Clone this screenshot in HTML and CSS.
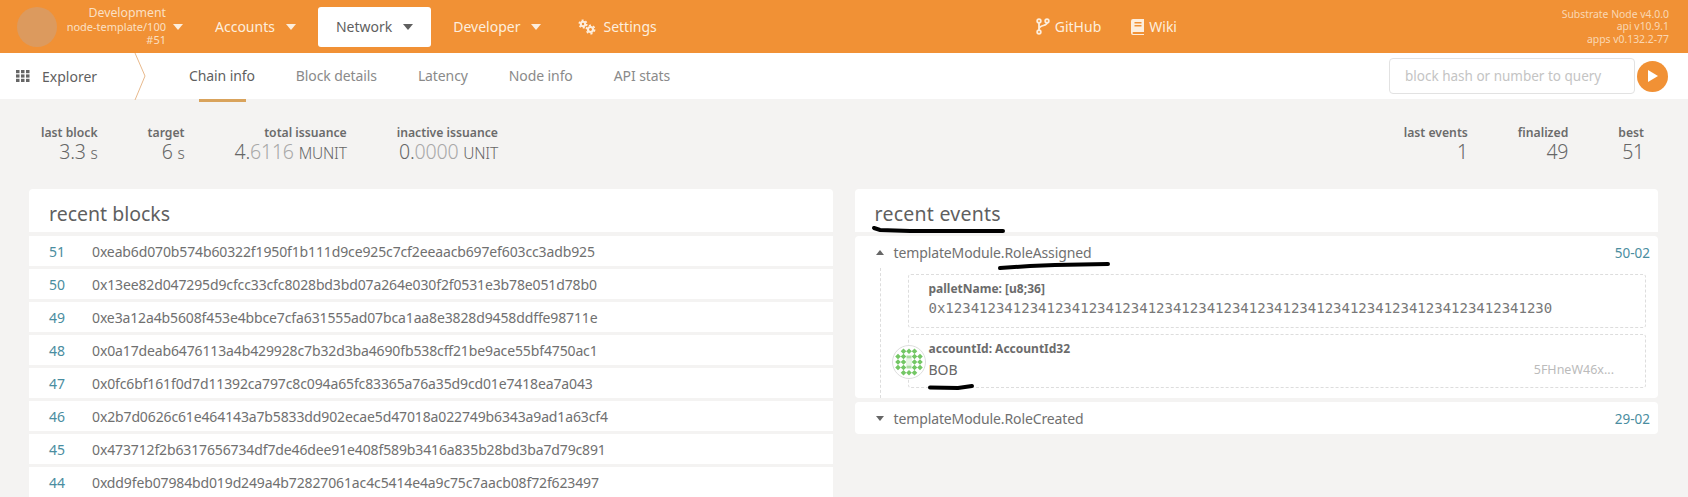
FILE: index.html
```html
<!DOCTYPE html>
<html lang="en">

<head>
    <meta charset="UTF-8">
    <title>Polkadot/Substrate Portal</title>
    <link rel="stylesheet" href="styles.css">
</head>

<body>
    <!-- top bar -->
    <header class="topbar">
        <div class="logo"></div>
        <div class="chain">
            <div class="chain-name">Development</div>
            <div class="chain-node">node-template/100</div>
            <div class="chain-best">#51</div>
        </div>
        <span class="caret chain-caret"></span>
        <nav class="menu">
            <a class="menu-item">Accounts<span class="caret"></span></a>
            <a class="menu-item active">Network<span class="caret"></span></a>
            <a class="menu-item">Developer<span class="caret"></span></a>
            <a class="menu-item settings">
                <svg class="icon" width="18" height="16" viewBox="0 0 18 16"><g fill="#fdeedd"><circle cx="5" cy="5" r="3.200"/><circle cx="12.5" cy="10.5" r="3.600"/></g><g fill="none" stroke="#fdeedd" stroke-width="1.500"><circle cx="5" cy="5" r="3.800" stroke-dasharray="2 2"/><circle cx="12.5" cy="10.5" r="4.200" stroke-dasharray="2.200 2.200"/></g><circle cx="5" cy="5" r="1.200" fill="#f19135"/><circle cx="12.5" cy="10.5" r="1.400" fill="#f19135"/></svg>Settings</a>
        </nav>
        <nav class="links">
            <a class="menu-item">
                <svg class="icon" width="14" height="17" viewBox="0 0 14 17"><g fill="none" stroke="#fdeedd" stroke-width="1.800"><circle cx="3" cy="3" r="1.800"/><circle cx="3" cy="14" r="1.800"/><circle cx="11" cy="3" r="1.800"/><path d="M3 5v7M11 5c0 3-8 2-8 6"/></g></svg>GitHub</a>
            <a class="menu-item">
                <svg class="icon" width="13" height="16" viewBox="0 0 13 16"><path fill="#fdeedd" d="M2 0h11v13H2.500a1 1 0 0 0 0 2H13v1H2a2 2 0 0 1-2-2V2a2 2 0 0 1 2-2z"/><rect x="3.500" y="3" width="7" height="1.500" fill="#f19135"/><rect x="3.500" y="6" width="7" height="1.500" fill="#f19135"/></svg>Wiki</a>
        </nav>
        <div class="versions">
            <div>Substrate Node v4.0.0</div>
            <div>api v10.9.1</div>
            <div>apps v0.132.2-77</div>
        </div>
    </header>

    <!-- sub navigation -->
    <div class="subbar">
        <div class="section">
            <svg class="grid-icon" width="14" height="12" viewBox="0 0 14 12"><g fill="#666"><rect width="3.500" height="3.200"/><rect x="5" width="3.500" height="3.200"/><rect x="10" width="3.500" height="3.200"/><rect y="4.400" width="3.500" height="3.200"/><rect x="5" y="4.400" width="3.500" height="3.200"/><rect x="10" y="4.400" width="3.500" height="3.200"/><rect y="8.800" width="3.500" height="3.200"/><rect x="5" y="8.800" width="3.500" height="3.200"/><rect x="10" y="8.800" width="3.500" height="3.200"/></g></svg>
            <span>Explorer</span>
        </div>
        <svg class="chevron" width="12" height="47" viewBox="0 0 12 47"><path d="M1 0l10 23L1 47" fill="none" stroke="#e8b98c"/></svg>
        <div class="tabs">
            <a class="tab active">Chain info</a>
            <a class="tab">Block details</a>
            <a class="tab">Latency</a>
            <a class="tab">Node info</a>
            <a class="tab">API stats</a>
        </div>
        <div class="query">
            <input class="query-input" placeholder="block hash or number to query">
            <button class="query-btn"><svg width="12" height="14" viewBox="0 0 12 14"><path d="M1 1l10 6-10 6z" fill="#fff"/></svg></button>
        </div>
    </div>

    <!-- summary -->
    <section class="summary">
        <div class="stats">
            <div class="stat"><label>last block</label><div class="val">3.3 <small>s</small></div></div>
            <div class="stat"><label>target</label><div class="val">6 <small>s</small></div></div>
            <div class="stat"><label>total issuance</label><div class="val">4.<span class="dec">6116</span> <small>MUNIT</small></div></div>
            <div class="stat"><label>inactive issuance</label><div class="val">0.<span class="dec">0000</span> <small>UNIT</small></div></div>
        </div>
        <div class="stats">
            <div class="stat"><label>last events</label><div class="val">1</div></div>
            <div class="stat"><label>finalized</label><div class="val">49</div></div>
            <div class="stat"><label>best</label><div class="val">51</div></div>
        </div>
    </section>

    <main class="columns">
        <section class="column">
            <h2 class="card-head">recent blocks</h2>
            <div class="row"><a class="num">51</a><span class="hash">0xeab6d070b574b60322f1950f1b111d9ce925c7cf2eeaacb697ef603cc3adb925</span></div>
            <div class="row"><a class="num">50</a><span class="hash">0x13ee82d047295d9cfcc33cfc8028bd3bd07a264e030f2f0531e3b78e051d78b0</span></div>
            <div class="row"><a class="num">49</a><span class="hash">0xe3a12a4b5608f453e4bbce7cfa631555ad07bca1aa8e3828d9458ddffe98711e</span></div>
            <div class="row"><a class="num">48</a><span class="hash">0x0a17deab6476113a4b429928c7b32d3ba4690fb538cff21be9ace55bf4750ac1</span></div>
            <div class="row"><a class="num">47</a><span class="hash">0x0fc6bf161f0d7d11392ca797c8c094a65fc83365a76a35d9cd01e7418ea7a043</span></div>
            <div class="row"><a class="num">46</a><span class="hash">0x2b7d0626c61e464143a7b5833dd902ecae5d47018a022749b6343a9ad1a63cf4</span></div>
            <div class="row"><a class="num">45</a><span class="hash">0x473712f2b6317656734df7de46dee91e408f589b3416a835b28bd3ba7d79c891</span></div>
            <div class="row"><a class="num">44</a><span class="hash">0xdd9feb07984bd019d249a4b72827061ac4c5414e4a9c75c7aacb08f72f623497</span></div>
        </section>

        <section class="column">
            <h2 class="card-head events-head">recent events
                <svg class="scribble s1" width="132" height="8" viewBox="0 0 132 8"><path d="M1 2l6 2 30 1 93 0" fill="none" stroke="#000" stroke-width="4" stroke-linecap="round"/></svg>
            </h2>
            <div class="event open">
                <div class="event-head">
                    <span class="arrow up"></span>
                    <span class="event-name">templateModule.RoleAssigned</span>
                    <a class="event-ref">50-02</a>
                    <svg class="scribble s2" width="112" height="8" viewBox="0 0 112 8"><path d="M2 6l30-2 25-1 53-1" fill="none" stroke="#000" stroke-width="4" stroke-linecap="round"/></svg>
                </div>
                <div class="params">
                    <div class="param">
                        <div class="param-label">palletName: [u8;36]</div>
                        <div class="param-value mono">0x123412341234123412341234123412341234123412341234123412341234123412341230</div>
                    </div>
                    <div class="param">
                        <div class="param-label">accountId: AccountId32</div>
                        <div class="param-value account"><span>BOB</span><span class="addr">5FHneW46x...</span></div>
                        <svg class="identicon" width="34" height="34" viewBox="0 0 34 34">
                            <circle cx="17" cy="17" r="16.500" fill="#fff" stroke="#ddd"/>
                            <g fill="#74c765">
                                <path d="M11.500 3.500l2.800 2.800-2.800 2.800-2.800-2.800zM17 3.500l2.800 2.800-2.800 2.800-2.800-2.800zM22.500 3.500l2.800 2.800-2.800 2.800-2.800-2.800z"/>
                                <path d="M6 8.700l2.800 2.800L6 14.300l-2.800-2.800zM11.500 8.700l2.800 2.800-2.800 2.800-2.800-2.800zM22.500 8.700l2.800 2.800-2.800 2.800-2.800-2.800zM28 8.700l2.800 2.800-2.800 2.800-2.800-2.800z"/>
                                <path d="M6 14.200L8.800 17 6 19.800 3.200 17zM11.500 14.200l2.800 2.800-2.800 2.800L8.700 17zM22.500 14.200l2.800 2.800-2.800 2.800-2.800-2.800zM28 14.200l2.800 2.800-2.800 2.800-2.800-2.800z"/>
                                <path d="M6 19.700l2.800 2.800L6 25.300l-2.800-2.800zM11.500 19.700l2.800 2.800-2.800 2.800-2.800-2.800zM22.500 19.700l2.800 2.800-2.800 2.800-2.800-2.800zM28 19.700l2.800 2.800-2.800 2.800-2.800-2.800z"/>
                                <path d="M11.500 24.900l2.800 2.800-2.800 2.800-2.800-2.800zM17 24.900l2.800 2.800-2.800 2.800-2.800-2.800zM22.500 24.900l2.800 2.800-2.800 2.800-2.800-2.800z"/>
                            </g>
                            <path d="M14.500 10.500h5v3h-5zM14.500 20.500h5v3h-5z" fill="#a9dca0"/>
                            <path d="M14 14h6v6h-6z" fill="#e7f5e3"/>
                        </svg>
                    </div>
                    <svg class="scribble s3" width="46" height="6" viewBox="0 0 46 6"><path d="M2 3.500l28 .5 14-2" fill="none" stroke="#000" stroke-width="4" stroke-linecap="round"/></svg>
                </div>
            </div>
            <div class="event">
                <div class="event-head">
                    <span class="arrow"></span>
                    <span class="event-name">templateModule.RoleCreated</span>
                    <a class="event-ref">29-02</a>
                </div>
            </div>
        </section>
    </main>
</body>

</html>
```
FILE: styles.css
```css
* {
    margin: 0;
    padding: 0;
    box-sizing: border-box;
}

html,
body {
    height: 497px;
    overflow: hidden;
}

body {
    background-color: #f4f3f2;
    color: #5f5f5f;
    font-family: "Noto Sans", "Open Sans", sans-serif;
    font-size: 14px;
}

/* top bar */
.topbar {
    display: flex;
    align-items: center;
    height: 53px;
    padding: 0 19px 0 17px;
    background-color: #f19135;
    color: #fdeedd;
}

.logo {
    width: 40px;
    height: 40px;
    border-radius: 50%;
    background-color: #dc9a5e;
}

.chain {
    width: 109px;
    text-align: right;
    font-size: 11px;
    line-height: 13.500px;
    opacity: 0.85;
}

.chain-name {
    font-size: 12.3px;
}

.caret {
    display: inline-block;
    width: 0;
    height: 0;
    margin-left: 11px;
    border-left: 5px solid transparent;
    border-right: 5px solid transparent;
    border-top: 6px solid currentColor;
    vertical-align: 2px;
}

.chain-caret {
    margin-left: 7px;
}

.menu {
    display: flex;
    align-items: center;
    gap: 4px;
    margin-left: 14px;
}

.menu-item {
    display: flex;
    align-items: center;
    height: 40px;
    padding: 0 18px;
    border-radius: 3px;
    font-size: 14px;
}

.menu-item.active {
    background-color: #fff;
    color: #5f5f5f;
}

.menu-item.settings {
    margin-left: -3px;
}

.icon {
    margin-right: 7px;
}

.links {
    display: flex;
    align-items: center;
    margin-left: 346px;
}

.links .menu-item {
    padding: 0 15px;
}

.links .icon {
    margin-right: 5px;
}

.versions {
    margin-left: auto;
    text-align: right;
    font-size: 10.4px;
    line-height: 12.500px;
    opacity: 0.75;
}

/* sub navigation */
.subbar {
    display: flex;
    align-items: center;
    height: 46px;
    padding-left: 16px;
    padding-right: 20px;
    background-color: #fff;
}

.section {
    display: flex;
    align-items: center;
    width: 118px;
    font-size: 14px;
}

.grid-icon {
    margin-right: 12px;
}

.chevron {
    flex: none;
}

.tabs {
    display: flex;
    height: 100%;
    margin-left: 43px;
}

.tab {
    position: relative;
    margin-right: 41px;
    line-height: 46px;
    font-size: 14px;
    letter-spacing: -0.1px;
    color: #8a8a8a;
}

.tab.active {
    color: #5f5f5f;
}

.tab.active::after {
    content: "";
    position: absolute;
    left: 10px;
    right: 9px;
    bottom: -3px;
    height: 3px;
    background-color: #d9a35c;
}

.query {
    display: flex;
    align-items: center;
    gap: 2px;
    margin-left: auto;
}

.query-input {
    width: 246px;
    height: 36px;
    padding: 0 15px;
    border: 1px solid #e2e2e2;
    border-radius: 4px;
    font-family: inherit;
    font-size: 13.500px;
}

.query-input::placeholder {
    color: #c4c4c4;
}

.query-btn {
    display: flex;
    align-items: center;
    justify-content: center;
    width: 31px;
    height: 31px;
    border: 0;
    border-radius: 50%;
    background-color: #f19135;
}

/* summary */
.summary {
    display: flex;
    justify-content: space-between;
    height: 90px;
    padding: 25px 44px 0 41px;
}

.stats {
    display: flex;
    gap: 50px;
}

.stat {
    text-align: right;
}

.stat label {
    display: block;
    font-size: 12.2px;
    font-weight: 600;
    line-height: 18px;
    color: #6b6b6b;
}

.val {
    margin-top: -3px;
    font-size: 19.5px;
    line-height: 26px;
    font-weight: 300;
    letter-spacing: -0.2px;
    color: #666;
}

.val small {
    font-size: 15.5px;
}

.dec {
    color: #a8a8a8;
}

/* columns */
.columns {
    display: flex;
    gap: 22px;
    padding: 0 30px 0 29px;
}

.column {
    flex: 1;
    display: flex;
    flex-direction: column;
    gap: 4px;
}

.card-head {
    position: relative;
    height: 43px;
    padding: 9px 20px 0;
    border-radius: 4px 4px 0 0;
    background-color: #fff;
    font-size: 19.5px;
    font-weight: 400;
    line-height: 32px;
}

.events-head {
    letter-spacing: 0.25px;
}

.row {
    display: flex;
    flex: none;
    align-items: center;
    height: 30px;
    margin-bottom: -1px;
    padding-left: 20px;
    background-color: #fff;
}

.num {
    width: 43px;
    color: #4a8da0;
}

.hash {
    letter-spacing: -0.13px;
    color: #707070;
}

/* events */
.event {
    border-radius: 4px;
    background-color: #fff;
}

.event-head {
    position: relative;
    display: flex;
    align-items: center;
    height: 32px;
    padding: 0 0 0 21px;
}

.arrow {
    width: 0;
    height: 0;
    margin-right: 10px;
    border-left: 4.500px solid transparent;
    border-right: 4.500px solid transparent;
    border-top: 5px solid #666;
}

.arrow.up {
    border-top: 0;
    border-bottom: 5px solid #666;
}

.event-name {
    font-size: 14px;
    letter-spacing: -0.12px;
    color: #707070;
}

.event-ref {
    margin-top: 2px;
    margin-left: auto;
    margin-right: 8px;
    color: #4a8da0;
    font-size: 13.5px;
}

.params {
    position: relative;
    margin-left: 25px;
    padding: 6px 12px 10px 27px;
    border-left: 1px dashed #ddd;
}

.param {
    position: relative;
    height: 54px;
    padding: 6px 20px 0;
    border: 1px dashed #ddd;
    border-radius: 3px;
}

.param+.param {
    margin-top: 6px;
}

.param-label {
    font-size: 12px;
    font-weight: 700;
    line-height: 16px;
    color: #6b6b6b;
}

.param-value {
    margin-top: 2px;
    font-size: 14px;
    line-height: 22px;
    color: #666;
}

.param-value.mono {
    margin-top: 0;
    font-family: "DejaVu Sans Mono", monospace;
    color: #777;
}

.account {
    display: flex;
    justify-content: space-between;
}

.addr {
    margin-right: 11px;
    font-size: 12.5px;
    color: #bbb;
}

.identicon {
    position: absolute;
    left: -17px;
    top: 10px;
}

.scribble {
    position: absolute;
    overflow: visible;
}

.s1 {
    left: 18px;
    top: 37px;
}

.s2 {
    left: 143px;
    top: 26px;
}

.s3 {
    left: 47px;
    bottom: 8px;
}
```
